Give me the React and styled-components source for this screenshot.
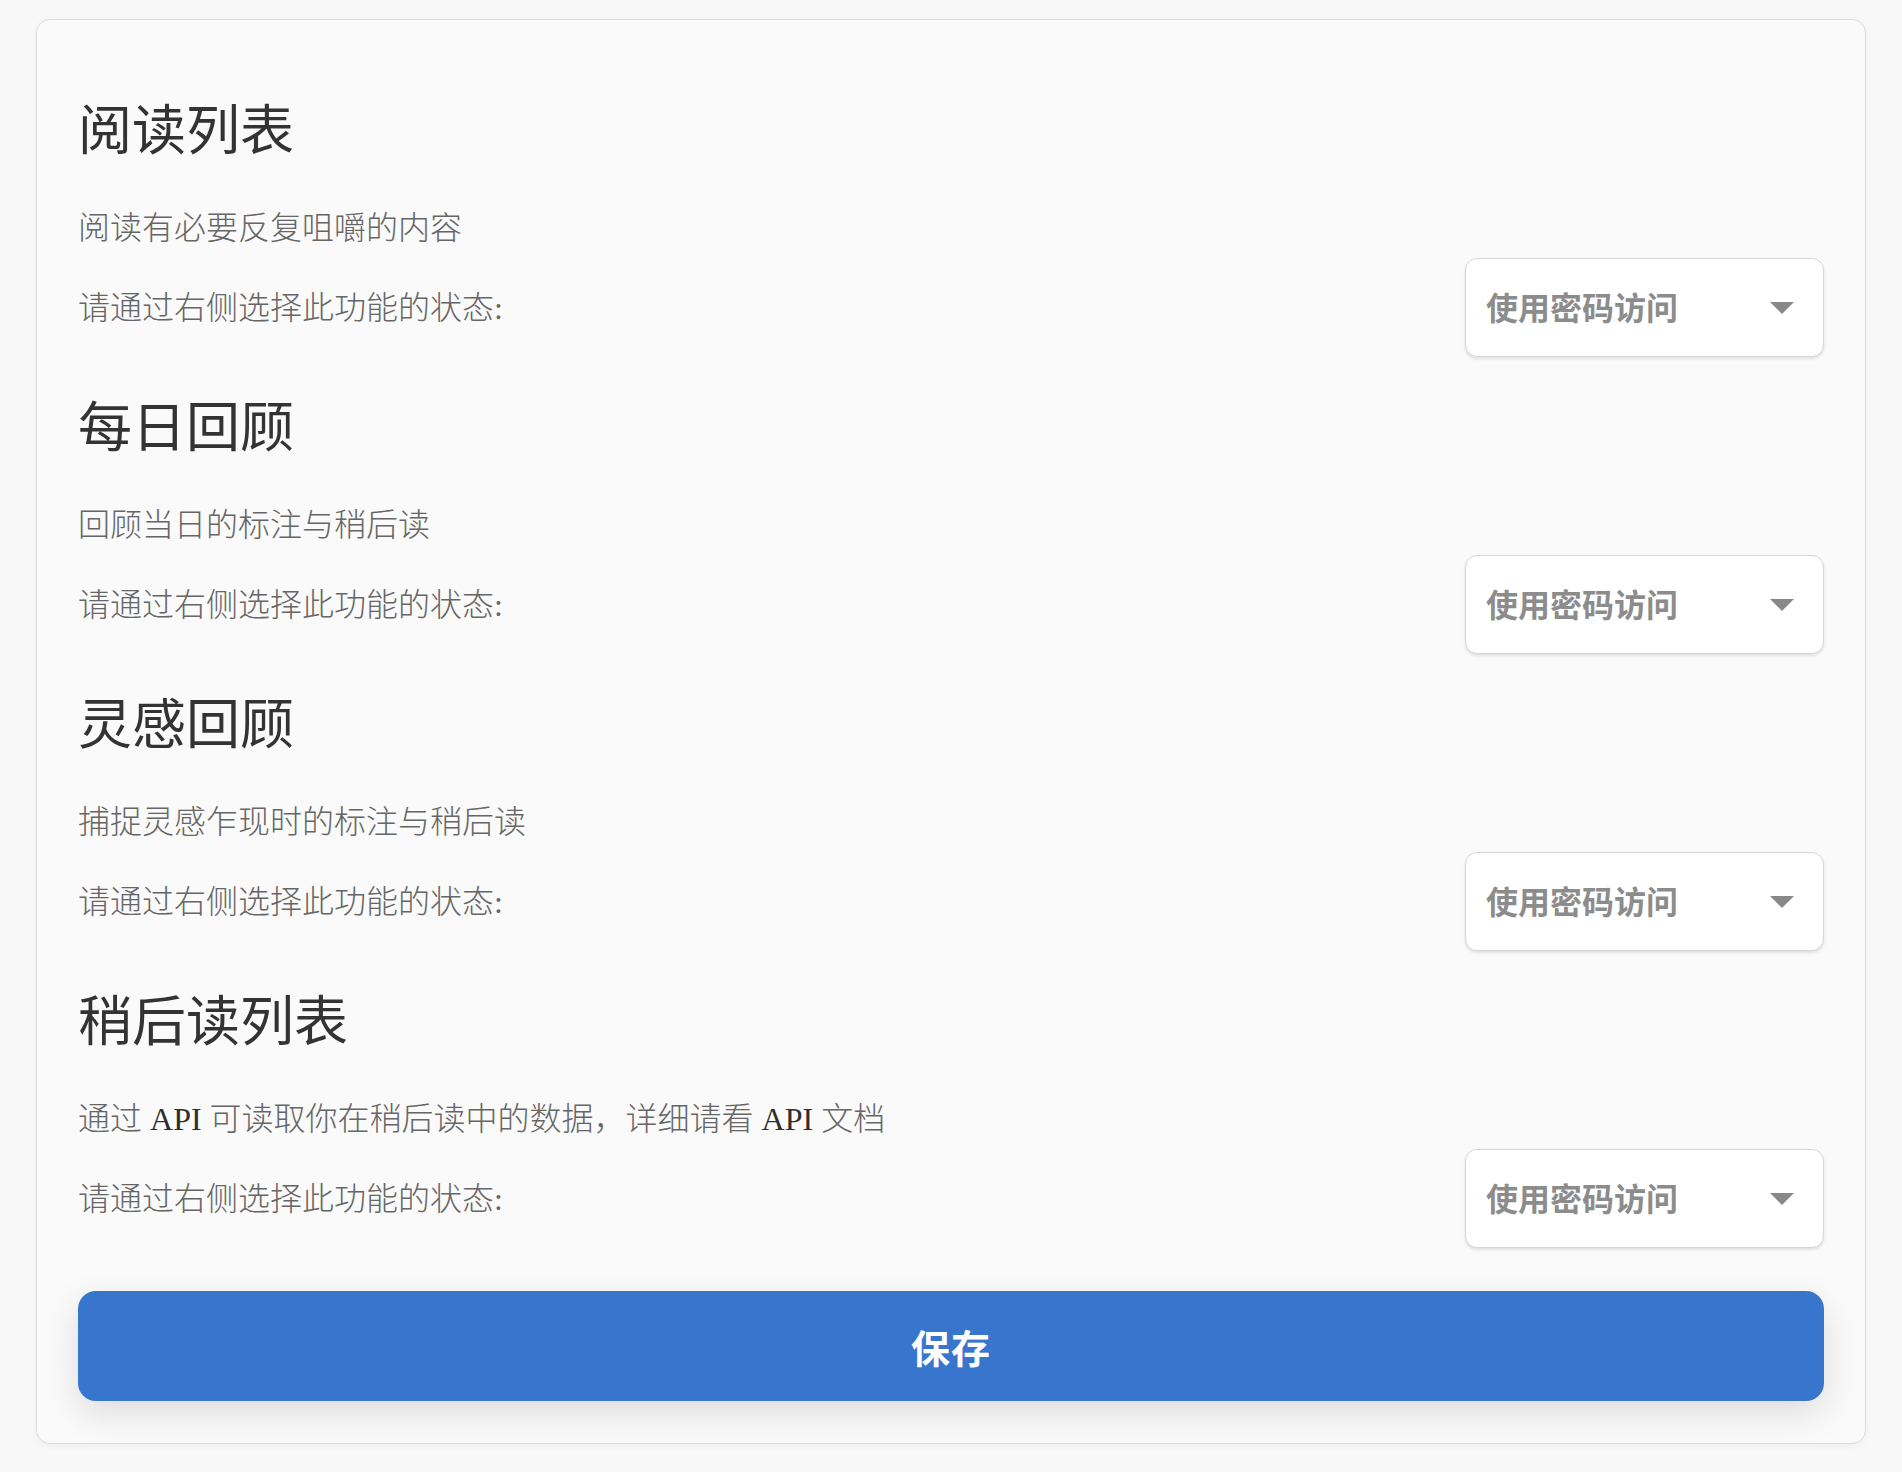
import React from "react";
import styled, { createGlobalStyle } from "styled-components";

const GlobalStyle = createGlobalStyle`
  html, body {
    margin: 0;
    padding: 0;
    background: #f8f8f8;
  }
  * {
    box-sizing: border-box;
  }
`;

const Page = styled.div`
  padding: 19px 36px 28px 36px;
`;

const Card = styled.div`
  background: #fafafa;
  border: 1px solid #dcdce0;
  border-radius: 14px;
  padding: 66px 41px 42px 41px;
  box-shadow: 0 2px 6px rgba(0, 0, 0, 0.04);
`;

const Section = styled.section`
  & + & {
    margin-top: 26px;
  }
`;

const Title = styled.h2`
  margin: 0;
  font-family: "Noto Sans CJK SC", sans-serif;
  font-size: 54px;
  line-height: 81px;
  font-weight: 400;
  color: #333333;
`;

const Desc = styled.p`
  margin: 37px 0 0 0;
  font-family: "Liberation Serif", "Noto Sans CJK SC", serif;
  font-size: 32px;
  line-height: 48px;
  font-weight: 300;
  color: #666666;
`;

const Latin = styled.span`
  color: #2e2e2e;
`;

const Row = styled.div`
  margin-top: 6px;
  display: flex;
  align-items: center;
  justify-content: space-between;
`;

const Label = styled.span`
  font-family: "Liberation Serif", "Noto Sans CJK SC", serif;
  font-size: 32px;
  line-height: 48px;
  font-weight: 300;
  color: #666666;
`;

const Select = styled.button`
  width: 359px;
  height: 99px;
  display: flex;
  align-items: center;
  justify-content: space-between;
  padding: 0 29px 4px 20px;
  background: #ffffff;
  border: 1px solid #d6d6d9;
  border-radius: 12px;
  box-shadow: 0 2px 3px rgba(0, 0, 0, 0.1);
  font-family: "Noto Sans CJK SC", sans-serif;
  font-size: 32px;
  font-weight: 600;
  color: #8c8c8c;
  cursor: pointer;
`;

const Caret = styled.svg`
  width: 24px;
  height: 12px;
  display: block;
  margin-top: 4px;
`;

const SaveButton = styled.button`
  display: block;
  width: 100%;
  height: 110px;
  margin-top: 43px;
  border: none;
  border-radius: 18px;
  background: #3875cc;
  box-shadow: 0 12px 36px rgba(0, 0, 0, 0.12);
  font-family: "Noto Sans CJK SC", sans-serif;
  font-size: 39px;
  font-weight: 600;
  color: #ffffff;
  letter-spacing: 1px;
  cursor: pointer;
`;

const sections = [
  { title: "阅读列表", desc: "阅读有必要反复咀嚼的内容" },
  { title: "每日回顾", desc: "回顾当日的标注与稍后读" },
  { title: "灵感回顾", desc: "捕捉灵感乍现时的标注与稍后读" },
  {
    title: "稍后读列表",
    desc: (
      <>
        通过 <Latin>API</Latin> 可读取你在稍后读中的数据，详细请看 <Latin>API</Latin> 文档
      </>
    ),
  },
];

const StatusSelect = () => (
  <Select type="button">
    <span>使用密码访问</span>
    <Caret viewBox="0 0 24 12">
      <path d="M0 0 L24 0 L12 12 Z" fill="#888888" />
    </Caret>
  </Select>
);

const App = () => {
  return (
    <Page>
      <GlobalStyle />
      <Card>
        {sections.map((s) => (
          <Section key={s.title}>
            <Title>{s.title}</Title>
            <Desc>{s.desc}</Desc>
            <Row>
              <Label>请通过右侧选择此功能的状态:</Label>
              <StatusSelect />
            </Row>
          </Section>
        ))}
        <SaveButton type="button">保存</SaveButton>
      </Card>
    </Page>
  );
};

export default App;
